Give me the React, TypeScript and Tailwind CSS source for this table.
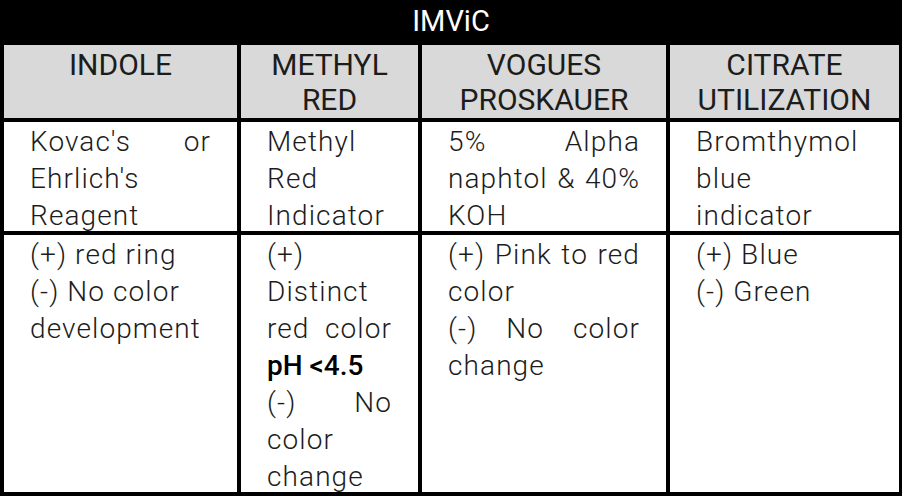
const FONT = "font-['Roboto','Liberation_Sans',sans-serif]"

type Line = { text: string; justify?: boolean; bold?: boolean }

const HEADERS: string[][] = [
  ["INDOLE"],
  ["METHYL", "RED"],
  ["VOGUES", "PROSKAUER"],
  ["CITRATE", "UTILIZATION"],
]

const REAGENTS: Line[][] = [
  [{ text: "Kovac's or", justify: true }, { text: "Ehrlich's" }, { text: "Reagent" }],
  [{ text: "Methyl" }, { text: "Red" }, { text: "Indicator" }],
  [
    { text: "5% Alpha", justify: true },
    { text: "naphtol & 40%", justify: true },
    { text: "KOH" },
  ],
  [{ text: "Bromthymol" }, { text: "blue" }, { text: "indicator" }],
]

const RESULTS: Line[][] = [
  [{ text: "(+) red ring" }, { text: "(-) No color" }, { text: "development" }],
  [
    { text: "(+)" },
    { text: "Distinct" },
    { text: "red color", justify: true },
    { text: "pH <4.5", bold: true },
    { text: "(-) No", justify: true },
    { text: "color" },
    { text: "change" },
  ],
  [
    { text: "(+) Pink to red", justify: true },
    { text: "color" },
    { text: "(-) No color", justify: true },
    { text: "change" },
  ],
  [{ text: "(+) Blue" }, { text: "(-) Green" }],
]

function Cell({ lines }: { lines: Line[] }) {
  return (
    <div className="overflow-hidden bg-white px-[26px] pt-[1px] text-[28px] leading-[37px] tracking-[1.1px] text-[#1c1c1c]">
      {lines.map((line, i) => (
        <div
          key={i}
          className={
            "whitespace-nowrap " +
            (line.justify ? "text-justify [text-align-last:justify] " : "") +
            (line.bold ? "font-medium tracking-normal text-black" : "font-light")
          }
        >
          {line.text}
        </div>
      ))}
    </div>
  )
}

export default function App() {
  return (
    <div className={`h-[500px] w-[904px] bg-white ${FONT}`}>
      <div className="h-[496px] w-[902px] bg-black">
        <div className="flex h-[45px] items-center justify-center pb-[1px] text-[29px] font-normal text-white">
          IMViC
        </div>
        <div className="grid grid-cols-[233px_177px_244px_229px] grid-rows-[73px_109px_257px] gap-[4px] pl-[4px]">
          {HEADERS.map((lines, i) => (
            <div
              key={i}
              className="bg-[#d9d9d9] pt-[2px] text-center text-[30px] leading-[35px] font-normal text-[#1c1c1c]"
            >
              {lines.map((l) => (
                <div key={l}>{l}</div>
              ))}
            </div>
          ))}
          {REAGENTS.map((lines, i) => (
            <Cell key={i} lines={lines} />
          ))}
          {RESULTS.map((lines, i) => (
            <Cell key={i} lines={lines} />
          ))}
        </div>
      </div>
    </div>
  )
}
